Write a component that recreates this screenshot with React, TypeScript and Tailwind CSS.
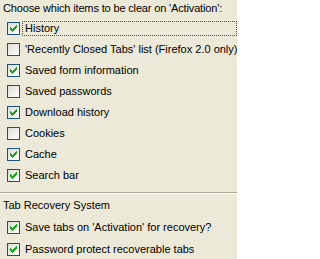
import React from 'react'

type Item = { label: string; checked: boolean; focused?: boolean }

const clearItems: Item[] = [
  { label: 'History', checked: true, focused: true },
  { label: "'Recently Closed Tabs' list (Firefox 2.0 only)", checked: false },
  { label: 'Saved form information', checked: true },
  { label: 'Saved passwords', checked: false },
  { label: 'Download history', checked: true },
  { label: 'Cookies', checked: false },
  { label: 'Cache', checked: true },
  { label: 'Search bar', checked: true },
]

const recoveryItems: Item[] = [
  { label: "Save tabs on 'Activation' for recovery?", checked: true },
  { label: 'Password protect recoverable tabs', checked: true },
]

// XP style tick, 7x7 pixels
const tick = [
  [6, 0],
  [5, 1], [6, 1],
  [0, 2], [4, 2], [5, 2], [6, 2],
  [0, 3], [1, 3], [3, 3], [4, 3], [5, 3],
  [0, 4], [1, 4], [2, 4], [3, 4], [4, 4],
  [1, 5], [2, 5], [3, 5],
  [2, 6],
]

function CheckBox({ checked }: { checked: boolean }) {
  return (
    <div className="w-[13px] h-[13px] shrink-0 border border-[#1c5180] bg-gradient-to-br from-[#dcdcd7] to-white flex items-center justify-center">
      {checked && (
        <svg width="7" height="7" viewBox="0 0 7 7" shapeRendering="crispEdges">
          {tick.map(([x, y]) => (
            <rect key={`${x}-${y}`} x={x} y={y} width="1" height="1" fill="#21a121" />
          ))}
        </svg>
      )}
    </div>
  )
}

function Row({ item, tall }: { item: Item; tall?: boolean }) {
  return (
    <div className={`flex items-center pl-[7px] ${tall ? 'h-[22px]' : 'h-[21px]'}`}>
      <CheckBox checked={item.checked} />
      <span
        className={`ml-[2px] flex-1 h-[15px] px-[2px] leading-[13px] whitespace-nowrap border ${
          item.focused ? 'border-dotted border-[#4d4d4d]' : 'border-transparent'
        }`}
      >
        {item.label}
      </span>
    </div>
  )
}

export default function App() {
  return (
    <div
      className="w-[237px] h-[259px] overflow-hidden bg-[#ece9d8] text-black text-[11px]"
      style={{ fontFamily: '"Liberation Sans", Arial, sans-serif' }}
    >
      <div className="h-[18px] pt-[1px] pl-[3px] leading-[14px] whitespace-nowrap tracking-[-0.15px]">
        Choose which items to be clear on 'Activation':
      </div>
      {clearItems.map((item) => (
        <Row key={item.label} item={item} />
      ))}
      <div className="mt-[6px] border-t border-[#aca899] border-b border-b-white" />
      <div className="h-[22px] pt-[4px] pl-[3px] leading-[14px]">Tab Recovery System</div>
      {recoveryItems.map((item) => (
        <Row key={item.label} item={item} tall />
      ))}
    </div>
  )
}
